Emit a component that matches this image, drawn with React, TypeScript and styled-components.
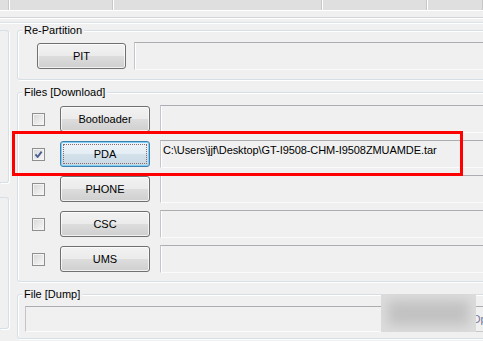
import React from "react";
import styled, { createGlobalStyle } from "styled-components";

const GlobalStyle = createGlobalStyle`
  html, body { margin: 0; padding: 0; background: #f0f0f0; }
  body {
    font-family: "Liberation Sans", Arial, sans-serif;
    font-size: 11px;
    color: #000;
    overflow: hidden;
  }
`;

const Window = styled.div`
  position: relative;
  width: 483px;
  height: 341px;
  overflow: hidden;
  background: #f0f0f0;
`;

const TabStrip = styled.div`
  display: flex;
  gap: 1px;
  height: 11px;
  padding-bottom: 1px;
  box-sizing: border-box;
  background: #ffffff;
`;

const TabCell = styled.div<{ $w?: number }>`
  flex: ${(p) => (p.$w ? `0 0 ${p.$w}px` : "1 1 auto")};
  background: #dfdfdf;
  border-right: 1px solid #c8c8c8;
  box-sizing: border-box;
`;

const Rule = styled.div<{ $color: string; $top: number }>`
  height: 1px;
  margin-top: ${(p) => p.$top}px;
  background: ${(p) => p.$color};
  box-shadow: 0 1px 0 #ffffff;
`;

const Body = styled.div`
  display: flex;
  gap: 8px;
  margin-top: 7px;
`;

const LeftColumn = styled.div`
  display: flex;
  flex-direction: column;
  gap: 14px;
  width: 9px;
  flex-shrink: 0;
`;

const SidePanel = styled.div<{ $h: number }>`
  height: ${(p) => p.$h}px;
  box-sizing: border-box;
  border: 1px solid #d5dfe5;
  border-left: none;
  border-radius: 0 3px 3px 0;
  box-shadow: 1px 1px 0 #ffffff;
`;

const Main = styled.div`
  display: flex;
  flex-direction: column;
  gap: 12px;
  width: 560px;
  flex-shrink: 0;
`;

const Group = styled.div<{ $pad: string }>`
  position: relative;
  border: 1px solid #d5dfe5;
  border-radius: 3px;
  box-shadow: inset 1px 1px 0 #ffffff, 1px 1px 0 #ffffff;
  padding: ${(p) => p.$pad};
`;

const GroupLabel = styled.span`
  position: absolute;
  left: 4px;
  top: -7px;
  padding: 0 2px;
  line-height: 13px;
  background: #f0f0f0;
`;

const Row = styled.div<{ $h: number; $gap?: number }>`
  display: flex;
  align-items: center;
  height: ${(p) => p.$h}px;
  gap: ${(p) => p.$gap ?? 0}px;
`;

const Rows = styled.div`
  display: flex;
  flex-direction: column;
  gap: 7px;
`;

const Button = styled.div<{ $w: number; $focused?: boolean }>`
  flex: 0 0 ${(p) => p.$w}px;
  height: 26px;
  box-sizing: border-box;
  border: 1px solid ${(p) => (p.$focused ? "#3c7fb1" : "#707070")};
  border-radius: 3px;
  background: ${(p) =>
    p.$focused
      ? "linear-gradient(#eef4f9 0%, #e4edf4 50%, #d4e1eb 50%, #c9d9e5 100%)"
      : "linear-gradient(#f2f2f2 0%, #ebebeb 50%, #dddddd 50%, #cfcfcf 100%)"};
  box-shadow: inset 0 0 0 1px
    ${(p) => (p.$focused ? "#7fd0f6" : "rgba(255,255,255,0.7)")};
  outline: ${(p) => (p.$focused ? "1px dotted #8a6a6a" : "none")};
  outline-offset: -4px;
  display: flex;
  align-items: center;
  justify-content: center;
  font-size: 11px;
`;

const TextField = styled.div<{ $h: number }>`
  flex: 1 1 auto;
  height: ${(p) => p.$h}px;
  box-sizing: border-box;
  border: 1px solid;
  border-color: #abadb3 #e3e9ef #fbfbfb #c2c6cc;
  box-shadow: inset 1px 0 0 #ffffff;
  padding: 3px 0 0 2px;
  line-height: 13px;
  white-space: nowrap;
  overflow: hidden;
  letter-spacing: -0.08px;
`;

const CheckBox = styled.div<{ $checked?: boolean }>`
  flex: 0 0 13px;
  height: 13px;
  box-sizing: border-box;
  border: 1px solid #8e8f8f;
  background: linear-gradient(135deg, #d6d6d6 0%, #e9e9e9 55%, #f8f8f8 100%);
  box-shadow: inset 0 0 0 1px #f4f4f4;
  display: flex;
  align-items: center;
  justify-content: center;
  margin-right: 15px;
`;

const ButtonGap = styled.div<{ $w: number }>`
  flex: 0 0 ${(p) => p.$w}px;
`;

const OpenBox = styled.div`
  flex: 0 0 110px;
  height: 26px;
  box-sizing: border-box;
  border: 1px solid;
  border-color: #abadb3 #e3e9ef #c8c8c8 #c2c6cc;
  padding-left: 50px;
  line-height: 24px;
  color: #77779a;
  margin-left: 9px;
  white-space: nowrap;
`;

const DumpField = styled.div`
  flex: 0 0 387px;
  height: 26px;
  box-sizing: border-box;
  border: 1px solid;
  border-color: #abadb3 #e3e9ef #fbfbfb #c2c6cc;
`;

const Blur = styled.div`
  position: absolute;
  left: 381px;
  top: 294px;
  width: 95px;
  height: 38px;
  background: #c3c2c2;
  box-shadow: inset 0 0 12px 7px #dcdcdc;
`;

const Highlight = styled.div`
  position: absolute;
  left: 12px;
  top: 131px;
  width: 451px;
  height: 45px;
  box-sizing: border-box;
  border: 3px solid #ff0000;
  pointer-events: none;
`;

const Check = () => (
  <svg width="9" height="9" viewBox="0 0 9 9">
    <path
      d="M1.5 4.4 L3.6 7 L7.6 1.6"
      fill="none"
      stroke="#4a5d93"
      strokeWidth="1.9"
      strokeLinejoin="round"
    />
  </svg>
);

const files = [
  { name: "Bootloader", checked: false, path: "" },
  {
    name: "PDA",
    checked: true,
    path: "C:\\Users\\jjf\\Desktop\\GT-I9508-CHM-I9508ZMUAMDE.tar",
  },
  { name: "PHONE", checked: false, path: "" },
  { name: "CSC", checked: false, path: "" },
  { name: "UMS", checked: false, path: "" },
];

export default function App() {
  return (
    <Window>
      <GlobalStyle />
      <TabStrip>
        <TabCell $w={9} />
        <TabCell $w={103} />
        <TabCell $w={208} />
        <TabCell $w={104} />
        <TabCell />
      </TabStrip>
      <Rule $color="#d4d4d4" $top={6} />
      <Rule $color="#dbe3ea" $top={4} />
      <Body>
        <LeftColumn>
          <SidePanel $h={153} />
          <SidePanel $h={132} />
        </LeftColumn>
        <Main>
          <Group $pad="11px 0 9px 19px">
            <GroupLabel>Re-Partition</GroupLabel>
            <Row $h={28} $gap={8}>
              <Button $w={89}>PIT</Button>
              <TextField $h={28} />
            </Row>
          </Group>
          <Group $pad="12px 0 8px 14px">
            <GroupLabel>Files [Download]</GroupLabel>
            <Rows>
              {files.map((f) => (
                <Row key={f.name} $h={28}>
                  <CheckBox $checked={f.checked}>{f.checked && <Check />}</CheckBox>
                  <Button $w={90} $focused={f.checked}>
                    {f.name}
                  </Button>
                  <ButtonGap $w={10} />
                  <TextField $h={28}>{f.path}</TextField>
                </Row>
              ))}
            </Rows>
          </Group>
          <Group $pad="11px 0 6px 7px">
            <GroupLabel>File [Dump]</GroupLabel>
            <Row $h={26}>
              <DumpField />
              <OpenBox>Open</OpenBox>
            </Row>
          </Group>
        </Main>
      </Body>
      <Blur />
      <Highlight />
    </Window>
  );
}
